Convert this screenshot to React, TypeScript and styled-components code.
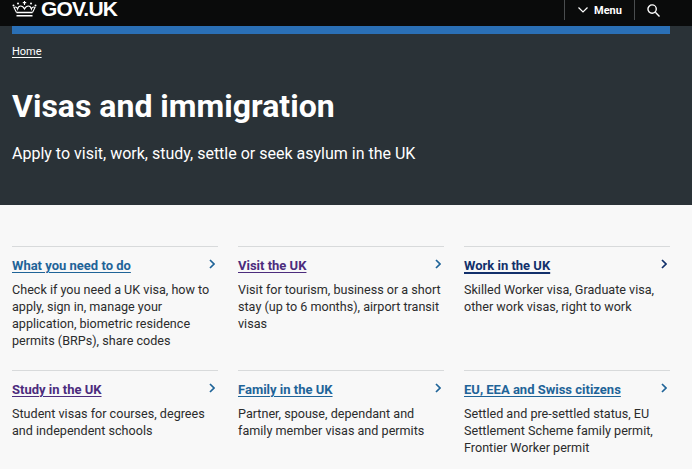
import { createGlobalStyle } from 'styled-components'
import styled from 'styled-components'

const GlobalStyle = createGlobalStyle`
  html, body {
    margin: 0;
    padding: 0;
    height: 469px;
    overflow: hidden;
    background: #f8f8f8;
    font-family: Roboto, "Noto Sans", Arial, sans-serif;
  }
`

const TopBar = styled.header`
  display: flex;
  align-items: flex-start;
  justify-content: space-between;
  height: 26px;
  padding: 0 32px 0 12px;
  background: #0a0b0b;
  color: #fff;
`

const Logo = styled.div`
  display: flex;
  align-items: flex-start;
  gap: 4px;
  font-family: "Liberation Sans", Arial, sans-serif;
  font-size: 21px;
  font-weight: 700;
  line-height: 18px;
  letter-spacing: -0.8px;
`

const Nav = styled.nav`
  display: flex;
  align-items: center;
  height: 20px;
`

const MenuButton = styled.div`
  display: flex;
  align-items: center;
  gap: 6px;
  width: 71px;
  height: 20px;
  padding-left: 13px;
  box-sizing: border-box;
  border-left: 1px solid #4a4d4f;
  border-right: 1px solid #4a4d4f;
  font-size: 11px;
  font-weight: 700;
`

const SearchButton = styled.div`
  display: flex;
  align-items: center;
  margin-left: 12px;
`

const Hero = styled.section`
  height: 179px;
  box-sizing: border-box;
  background: #2a3237;
  color: #fff;
`

const BlueBar = styled.div`
  height: 8px;
  margin: 0 22px 0 12px;
  background: #2a6fb5;
`

const HeroInner = styled.div`
  padding: 10px 12px 0;
`

const Crumb = styled.a`
  display: block;
  font-size: 11px;
  line-height: 16px;
  color: #fff;
  text-decoration: underline;
  text-underline-offset: 2px;
`

const Title = styled.h1`
  margin: 26px 0 0;
  font-size: 32px;
  font-weight: 700;
  line-height: 40px;
`

const Subtitle = styled.p`
  margin: 17px 0 0;
  font-size: 16px;
  line-height: 22px;
`

const Grid = styled.main`
  display: grid;
  grid-template-columns: repeat(3, 206px);
  grid-template-rows: 124px 99px;
  column-gap: 20px;
  padding: 41px 0 0 12px;
`

const Card = styled.article`
  box-sizing: border-box;
  border-top: 1px solid #d8dadb;
  padding-top: 10px;
`

const CardHead = styled.div`
  display: flex;
  justify-content: space-between;
  align-items: flex-start;
`

const CardTitle = styled.a<{ $color: string; $thick?: boolean }>`
  font-size: 13px;
  font-weight: 700;
  line-height: 17px;
  color: ${p => p.$color};
  text-decoration: underline;
  text-decoration-thickness: ${p => (p.$thick ? '2px' : '1px')};
  text-underline-offset: 2px;
`

const Chevron = styled.svg<{ $dark?: boolean }>`
  flex: none;
  margin: 2px 3px 0 0;
  stroke: ${p => (p.$dark ? '#12306b' : '#1f6498')};
`

const CardText = styled.p`
  margin: 7px 0 0;
  font-size: 12.6px;
  line-height: 17px;
  color: #2b2c2d;
`

const cards = [
  {
    title: 'What you need to do',
    color: '#1f6498',
    text: 'Check if you need a UK visa, how to apply, sign in, manage your application, biometric residence permits (BRPs), share codes',
  },
  {
    title: 'Visit the UK',
    color: '#4c2c7d',
    text: 'Visit for tourism, business or a short stay (up to 6 months), airport transit visas',
  },
  {
    title: 'Work in the UK',
    color: '#12306b',
    thick: true,
    text: 'Skilled Worker visa, Graduate visa, other work visas, right to work',
  },
  {
    title: 'Study in the UK',
    color: '#4c2c7d',
    text: 'Student visas for courses, degrees and independent schools',
  },
  {
    title: 'Family in the UK',
    color: '#1f6498',
    text: 'Partner, spouse, dependant and family member visas and permits',
  },
  {
    title: 'EU, EEA and Swiss citizens',
    color: '#1f6498',
    text: 'Settled and pre-settled status, EU Settlement Scheme family permit, Frontier Worker permit',
  },
]

function Crown() {
  return (
    <svg width="25" height="17" viewBox="0 0 25 17" fill="none" stroke="#fff" strokeWidth="1.1">
      <path d="M12.5 1v4M10.8 2.6h3.4" />
      <path d="M4.5 12.5 2 7.500c1.600-1 3-.3 3.600 1.500.4-1.600 1.500-3 3-3 1.600 0 3 1.200 3.900 3 .9-1.800 2.300-3 3.900-3 1.500 0 2.600 1.400 3 3 .6-1.800 2-2.500 3.600-1.500l-2.500 5" />
      <path d="M4.500 12.500h16M4.500 15.800h16" strokeWidth="1.500" />
      <circle cx="6" cy="3.500" r="1" fill="#fff" stroke="none" />
      <circle cx="19" cy="3.500" r="1" fill="#fff" stroke="none" />
      <circle cx="1.500" cy="5.500" r="1" fill="#fff" stroke="none" />
      <circle cx="23.500" cy="5.500" r="1" fill="#fff" stroke="none" />
    </svg>
  )
}

export default function App() {
  return (
    <>
      <GlobalStyle />
      <TopBar>
        <Logo>
          <Crown />
          GOV.UK
        </Logo>
        <Nav>
          <MenuButton>
            <svg width="10" height="6" viewBox="0 0 10 6" fill="none" stroke="#fff" strokeWidth="1.2">
              <path d="M.5.5 5 5 9.500.5" />
            </svg>
            Menu
          </MenuButton>
          <SearchButton>
            <svg width="13" height="13" viewBox="0 0 14 14" fill="none" stroke="#fff" strokeWidth="1.5">
              <circle cx="5.500" cy="5.500" r="4.500" />
              <path d="m9 9 4.500 4.500" />
            </svg>
          </SearchButton>
        </Nav>
      </TopBar>
      <Hero>
        <BlueBar />
        <HeroInner>
          <Crumb>Home</Crumb>
          <Title>Visas and immigration</Title>
          <Subtitle>Apply to visit, work, study, settle or seek asylum in the UK</Subtitle>
        </HeroInner>
      </Hero>
      <Grid>
        {cards.map(card => (
          <Card key={card.title}>
            <CardHead>
              <CardTitle $color={card.color} $thick={card.thick}>{card.title}</CardTitle>
              <Chevron $dark={card.thick} width="6" height="10" viewBox="0 0 6 10" fill="none" strokeWidth="1.7">
                <path d="m1 1 4 4-4 4" />
              </Chevron>
            </CardHead>
            <CardText>{card.text}</CardText>
          </Card>
        ))}
      </Grid>
    </>
  )
}
